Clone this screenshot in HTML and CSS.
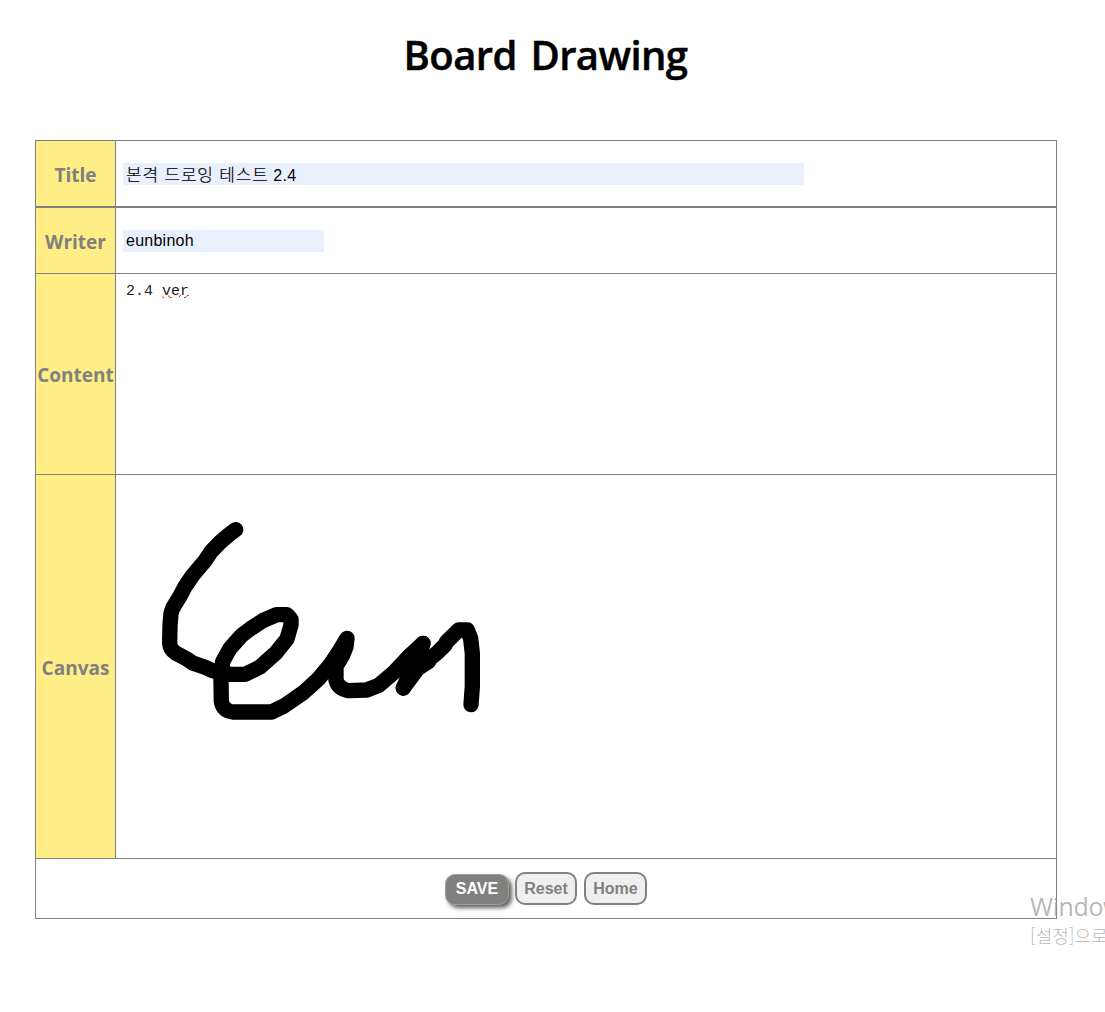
FILE: index.html
```html
<!DOCTYPE html>
<html lang="ko">
<head>
<meta charset="utf-8">
<title>Board Drawing</title>
<link rel="stylesheet" href="styles.css">
</head>
<body>
<h1 class="heading">Board Drawing</h1>
<main class="board">
  <div class="row row-title">
    <div class="label">Title</div>
    <div class="cell"><div class="field field-wide"><span class="hangul">본격 드로잉 테스트</span> 2.4</div></div>
  </div>
  <div class="row row-writer">
    <div class="label">Writer</div>
    <div class="cell"><div class="field field-short">eunbinoh</div></div>
  </div>
  <div class="row row-content">
    <div class="label label-content">Content</div>
    <div class="cell cell-text"><div class="textarea">2.4 <span class="misspelled">ver</span></div></div>
  </div>
  <div class="row row-canvas">
    <div class="label">Canvas</div>
    <svg class="drawing" width="940" height="383" viewBox="0 0 940 383">
      <g transform="translate(34 35) scale(.33333)" fill="none" stroke="#000" stroke-width="46" stroke-linecap="round" stroke-linejoin="round">
        <path d="M257 59L237 74L210 97L184 124L166 151L128 196L105 230L88 262L68 295L63 310L60 345L59 400Q60 418 78 430L112 448L130 460L165 472L190 483L218 487L240 493H285L310 481L330 471L378 428L411 387L423 345V328L411 314H380L340 331L300 357L275 376L240 415L218 455L213 510L214 575Q219 602 248 606H365L402 588L460 548L505 507L540 465L565 428L591 385L588 410L578 436L558 469V510Q564 536 596 542L650 540L686 526L731 488L780 436L819 400L804 445L786 486L760 534"/>
        <path d="M819 400L760 534L803 476L835 455L840 446L862 428L885 405L890 395L926 360H952L962 385L967 430V530L963 584"/>
      </g>
    </svg>
  </div>
  <div class="actions">
    <button class="button button-save">SAVE</button>
    <button class="button button-reset">Reset</button>
    <button class="button button-home">Home</button>
  </div>
</main>
<div class="watermark">
  <div class="watermark-title">Windows</div>
  <div class="watermark-text">[설정]으로</div>
</div>
</body>
</html>
```
FILE: styles.css
```css
* { box-sizing: border-box; }
body {
  margin: 0;
  height: 1012px;
  overflow: hidden;
  position: relative;
  background: #fff;
  font-family: "Liberation Sans", "Noto Sans CJK KR", sans-serif;
}
.heading {
  margin: 0;
  height: 140px;
  padding: 27px 14px 0 0;
  text-align: center;
  font: 600 40px/55px "Open Sans", "Noto Sans", sans-serif;
  letter-spacing: -.6px;
  word-spacing: 4px;
  -webkit-text-stroke: .5px #000;
}
.board {
  width: 1022px;
  margin-left: 35px;
  border: 1px solid #808080;
}
.row {
  display: grid;
  grid-template-columns: 80px 940px;
  border-bottom: 1px solid #808080;
}
.row-title { height: 67px; border-bottom-width: 2px; }
.row-writer { height: 66px; }
.row-content { height: 201px; }
.row-canvas { height: 384px; }
.label {
  display: flex;
  align-items: center;
  justify-content: center;
  padding-top: 2px;
  background: #ffed86;
  border-right: 1px solid #808080;
  color: #808080;
  font: 700 19px/26px "Open Sans", "Noto Sans", sans-serif;
}
.cell {
  display: flex;
  align-items: center;
  padding: 1px 7px 0;
}
.field {
  height: 22px;
  padding-left: 3px;
  background: #e8f0fe;
  font-size: 16px;
  line-height: 21px;
  letter-spacing: .25px;
  white-space: nowrap;
}
.field-wide { width: 681px; line-height: 24px; }
.hangul {
  font: 300 17px/22px "Noto Sans CJK KR", sans-serif;
  letter-spacing: .8px;
  -webkit-text-stroke: .2px #000;
}
.field-short { width: 201px; }
.cell-text { align-items: flex-start; padding: 8px 10px; }
.textarea {
  color: #222;
  font: 300 15px/20px "Liberation Mono", monospace;
}
.misspelled {
  text-decoration: underline wavy #f00 1px;
  text-underline-offset: -1px;
}
.drawing { display: block; }
.actions {
  height: 59px;
  display: flex;
  justify-content: center;
  align-items: center;
}
.button {
  height: 33px;
  padding: 0;
  border: 2px solid #808080;
  border-radius: 10px;
  background: #efefef;
  color: #808080;
  font: 700 16px/20px "Liberation Sans", sans-serif;
}
.button-save {
  width: 64px;
  height: 31px;
  margin: 2px 6px 0 0;
  padding-bottom: 2px;
  border: 1px solid #a0a090;
  background: #808080;
  color: #fff;
  box-shadow: 3px 3px 4px #606060;
}
.button-reset { width: 62px; margin-right: 7px; }
.button-home { width: 63px; }
.watermark {
  position: absolute;
  left: 1030px;
  top: 889px;
  width: 75px;
  white-space: nowrap;
  color: rgba(145, 145, 145, .66);
}
.watermark-title {
  font: 400 25px/34px "Open Sans", "Noto Sans", sans-serif;
  letter-spacing: -.4px;
}
.watermark-text { font: 300 18px/24px "Noto Sans CJK KR", sans-serif; }
```
